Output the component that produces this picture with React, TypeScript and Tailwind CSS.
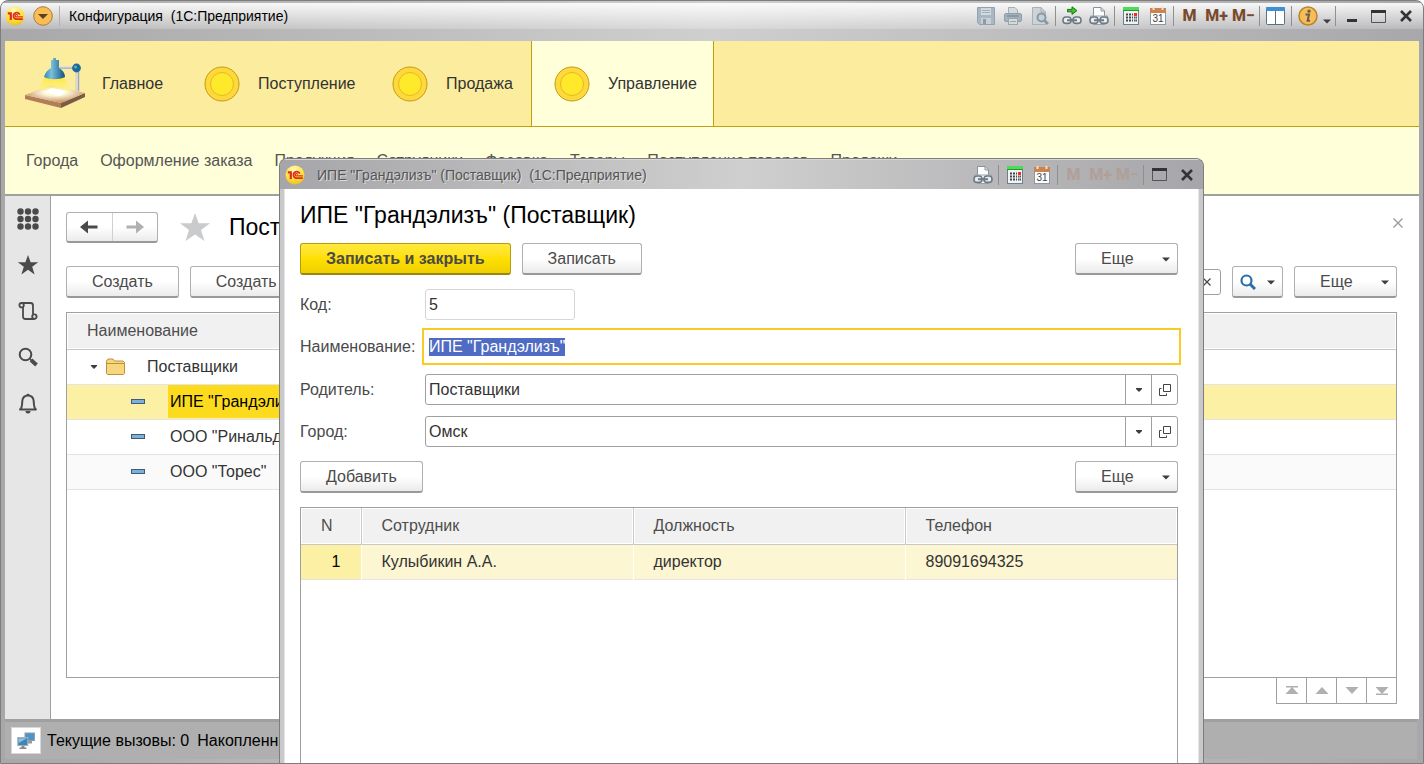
import type { ReactNode } from 'react';

const BTN =
  'h-8 rounded-[3px] border border-[#b0b0b0] border-b-2 border-b-[#999] bg-gradient-to-b from-white from-50% to-[#ebebeb] text-[#4a4a4a] flex items-center';

function Logo() {
  return (
    <svg width="20" height="20" viewBox="0 0 20 20" className="shrink-0">
      <defs>
        <radialGradient id="logo" cx="0.45" cy="0.25" r="0.8">
          <stop offset="0" stopColor="#fffbc0" />
          <stop offset="0.6" stopColor="#ffe23a" />
          <stop offset="1" stopColor="#e9b91c" />
        </radialGradient>
      </defs>
      <circle cx="10" cy="10" r="9.5" fill="url(#logo)" />
      <path d="M2.8 7.4 H5.8 V14" fill="none" stroke="#e02a1b" strokeWidth="2.2" />
      <path d="M14.8 8.6 A3.3 3.3 0 1 0 11.6 13.2 H17.8" fill="none" stroke="#e02a1b" strokeWidth="1.7" />
      <path d="M12.6 9.6 A1.2 1.2 0 1 0 11.6 10.9 H17.8" fill="none" stroke="#e02a1b" strokeWidth="1.2" />
    </svg>
  );
}

function Chain() {
  return (
    <g fill="none" stroke="#6d7984" strokeWidth="1.6">
      <rect x="1" y="11" width="8" height="6.4" rx="3" fill="#e8edf0" />
      <rect x="11" y="11" width="8" height="6.4" rx="3" fill="#e8edf0" />
      <path d="M5 14.2 H15" strokeWidth="2" />
    </g>
  );
}

function SaveIcon() {
  return (
    <svg width="20" height="20" viewBox="0 0 20 20">
      <path d="M1.5 1.5 H18.5 V18.5 H3.5 L1.5 16.5 Z" fill="#a9b7c3" stroke="#93a2af" />
      <rect x="5" y="2" width="10" height="7" fill="#d3dade" />
      <path d="M6 4.5 H14 M6 6.5 H14" stroke="#a3b0bb" />
      <rect x="5" y="12" width="10" height="6" fill="#c7d0d6" />
      <rect x="7" y="13" width="3" height="5" fill="#8c9ba9" />
    </svg>
  );
}

function PrintIcon() {
  return (
    <svg width="20" height="20" viewBox="0 0 20 20">
      <path d="M5.5 8 V1.5 H12 L14.5 4 V8" fill="#d5dadd" stroke="#a3adb5" />
      <rect x="1.5" y="7.5" width="17" height="8" rx="1.5" fill="#a5b3bf" stroke="#8f9daa" />
      <path d="M4 10 H16" stroke="#7f8f9c" strokeWidth="1.5" />
      <rect x="5.5" y="12.5" width="9" height="6" fill="#d5dadd" stroke="#9aa5ae" />
      <path d="M7 15.5 H13" stroke="#9aa5ae" />
    </svg>
  );
}

function PreviewIcon() {
  return (
    <svg width="20" height="20" viewBox="0 0 20 20">
      <path d="M2.5 1.5 H11 L15.5 6 V18.5 H2.5 Z" fill="#ced3d6" stroke="#a9b2b8" />
      <path d="M11 1.5 V6 H15.5" fill="none" stroke="#a9b2b8" />
      <circle cx="11.5" cy="11.5" r="4" fill="#c2d0da" stroke="#8798a6" strokeWidth="2" />
      <path d="M14.5 14.5 L18 18" stroke="#8798a6" strokeWidth="2.6" />
    </svg>
  );
}

function LinkIcon() {
  return (
    <svg width="20" height="20" viewBox="0 0 20 20">
      <Chain />
      <path d="M5.5 3.4 H10 V0.8 L15 4.6 L10 8.4 V5.8 H5.5 Z" fill="#3fc42c" stroke="#17770f" />
    </svg>
  );
}

function LinkPrintIcon() {
  return (
    <svg width="20" height="20" viewBox="0 0 20 20">
      <path d="M4.5 10 V1.5 H12 L15.5 5 V10" fill="#fff" stroke="#8592a0" />
      <path d="M12 1.5 V5 H15.5" fill="none" stroke="#8592a0" />
      <path d="M1.5 10 H18.5 V16 H15.5 V18.5 H4.5 V16 H1.5 Z" fill="#f4f6f8" stroke="#97a3ae" />
      <Chain />
    </svg>
  );
}

function CalcIcon() {
  return (
    <svg width="20" height="20" viewBox="0 0 20 20">
      <rect x="2.5" y="1.5" width="15" height="17" fill="#eef3f6" stroke="#6f7f8d" />
      <rect x="2" y="1" width="16" height="4" fill="#4ddb58" />
      <path d="M2 4.5 H18" stroke="#1f9a2c" />
      <path d="M5 8.5 H12 M5 11.5 H12 M5 14.5 H12" stroke="#444" strokeWidth="2" strokeDasharray="2 1" />
      <rect x="13" y="7" width="3" height="3" fill="#ff2a1f" />
      <path d="M13 11.5 H16 M13 14.5 H16" stroke="#555" strokeWidth="2" strokeDasharray="1.4 0.4" />
    </svg>
  );
}

function CalendarIcon() {
  return (
    <svg width="20" height="20" viewBox="0 0 20 20">
      <rect x="2.5" y="3.5" width="15" height="15" fill="#fdfdfd" stroke="#8b97a3" />
      <rect x="2" y="2" width="16" height="5" fill="#c98450" />
      <path d="M5.5 1 V4 M14.5 1 V4" stroke="#f4dcc8" strokeWidth="2" />
      <text x="10" y="16" textAnchor="middle" fontSize="10" fill="#444">31</text>
    </svg>
  );
}

function PanelsIcon() {
  return (
    <svg width="20" height="20" viewBox="0 0 20 20">
      <rect x="0.5" y="1.5" width="18" height="17" rx="1" fill="#fff" stroke="#5b6f82" />
      <rect x="0" y="1" width="19" height="4" rx="1" fill="#3f8fd4" />
      <path d="M9.5 5 V18" stroke="#5b6f82" />
    </svg>
  );
}

function InfoIcon() {
  return (
    <svg width="20" height="20" viewBox="0 0 20 20">
      <circle cx="10" cy="10" r="9" fill="#f6bd5a" stroke="#b8882c" strokeWidth="1.6" />
      <circle cx="11" cy="5.2" r="1.6" fill="#6a5c4a" />
      <path d="M7.5 8.5 H11 L9.6 14.8 H12" fill="none" stroke="#6a5c4a" strokeWidth="2" />
    </svg>
  );
}

function MaxIcon() {
  return (
    <svg width="15" height="13" viewBox="0 0 15 13">
      <path d="M0.5 2 V12.5 H14.5 V2" fill="none" stroke="#555" />
      <path d="M0 1.5 H15" stroke="#333" strokeWidth="3" />
    </svg>
  );
}

function CloseIcon() {
  return (
    <svg width="12" height="12" viewBox="0 0 12 12">
      <path d="M1 1 L11 11 M11 1 L1 11" stroke="#333" strokeWidth="2.6" />
    </svg>
  );
}

function Caret() {
  return (
    <svg width="8" height="5" viewBox="0 0 8 5" className="shrink-0 mt-0.5">
      <path d="M0 0.5 H8 L4 4.5 Z" fill="#3d3d3d" />
    </svg>
  );
}

function SmallCaret() {
  return (
    <svg width="6" height="4" viewBox="0 0 6 4" className="shrink-0">
      <path d="M0 0 H6 V1 L3 4 L0 1 Z" fill="#3d3d3d" />
    </svg>
  );
}

function LampIcon() {
  return (
    <svg width="60" height="52" viewBox="0 0 60 52" className="shrink-0">
      <defs>
        <linearGradient id="shade" x1="0" x2="1" y1="0" y2="0">
          <stop offset="0" stopColor="#2f86ae" />
          <stop offset="0.35" stopColor="#7cc0dc" />
          <stop offset="1" stopColor="#0f5480" />
        </linearGradient>
        <linearGradient id="light" x1="0" x2="0" y1="0" y2="1">
          <stop offset="0" stopColor="#ffe83a" />
          <stop offset="1" stopColor="#fff6a8" stopOpacity="0.4" />
        </linearGradient>
        <radialGradient id="desk" cx="0.5" cy="0.4" r="0.55">
          <stop offset="0" stopColor="#fff" />
          <stop offset="0.35" stopColor="#fff6dc" />
          <stop offset="1" stopColor="#c69868" />
        </radialGradient>
      </defs>
      <path d="M0 37 L36 45 V50 L0 41 Z" fill="#b37c5a" />
      <path d="M36 45 L60 35 V39 L36 50 Z" fill="#7d5a44" />
      <path d="M0 37 L26 27 L60 35 L36 45 Z" fill="url(#desk)" />
      <path d="M20 19 H39 L46 34 L28 38 L14 31 Z" fill="url(#light)" />
      <path d="M18 34 L26 30 L42 33 L35 38 Z" fill="#fff" />
      <path d="M34 9.5 H50" stroke="#b5b9bd" strokeWidth="3" />
      <path d="M34 8.8 H50" stroke="#f0f2f3" />
      <path d="M52.5 12 V33" stroke="#a2a5aa" strokeWidth="3.4" />
      <path d="M52 12 V33" stroke="#eceef0" strokeWidth="1.4" />
      <circle cx="51.5" cy="10" r="4.4" fill="#1c6a97" />
      <circle cx="50.5" cy="9" r="1.5" fill="#5fa9cb" />
      <path d="M28 0 H31 V2 H34 V10 C37 11.5 40 15 40 19 C34 22 25 22 19 19 C20 15 23 11.5 26 10 V2 H28 Z" fill="url(#shade)" />
    </svg>
  );
}

function Coin() {
  return (
    <svg width="36" height="36" viewBox="0 0 36 36" className="shrink-0">
      <circle cx="18" cy="18" r="17" fill="#ffd83e" stroke="#c09c10" />
      <circle cx="18" cy="18" r="11.5" fill="#ffe92b" stroke="#e6b821" />
    </svg>
  );
}

function Cell({ label, children }: { label: string; children: ReactNode }) {
  return (
    <button aria-label={label} className="w-[27px] h-6 flex items-center justify-center">
      {children}
    </button>
  );
}

function Sep() {
  return <div className="w-px h-5 mx-0.5 bg-[#8f8f8f]" />;
}

function MemoryKeys({ color }: { color: string }) {
  return (
    <div className={`flex text-base font-extrabold font-[Roboto,sans-serif] ${color}`}>
      {['M', 'M+', 'M−'].map(k => (
        <button key={k} className="w-[27px] flex justify-center whitespace-nowrap">{k}</button>
      ))}
    </div>
  );
}

function MoreButton() {
  return (
    <button className={`${BTN} w-[103px] pl-[25px] pr-[7px] justify-between`}>
      Еще
      <Caret />
    </button>
  );
}

function SelectField({ id, label, value }: { id: string; label: string; value: string }) {
  return (
    <div className="flex items-center">
      <label htmlFor={id} className="w-[125px] shrink-0 text-[#4a4a4a]">{label}</label>
      <div className="flex-1 flex h-[31px] rounded-[3px] border border-[#a0a0a0]">
        <div className="relative flex-1 flex">
          <select id={id} className="appearance-none w-full pl-[3px] pr-7 text-[#333] outline-none">
            <option>{value}</option>
          </select>
          <span className="absolute inset-y-0 right-0 w-[26px] border-l border-[#a0a0a0] flex items-center justify-center pointer-events-none">
            <SmallCaret />
          </span>
        </div>
        <button aria-label={`Открыть ${value}`} className="w-[26px] border-l border-[#a0a0a0] flex items-center justify-center">
          <svg width="12" height="12" viewBox="0 0 12 12">
            <path d="M4.5 0.5 H11.5 V7.5 H4.5 Z M2.5 4.5 H0.5 V11.5 H7.5 V9.5" fill="none" stroke="#444" />
          </svg>
        </button>
      </div>
    </div>
  );
}

function SupplierDialog() {
  return (
    <div
      role="dialog"
      className="absolute left-[278px] right-[219px] top-[157px] bottom-0 flex flex-col rounded-t-lg overflow-hidden border border-b-0 border-[#7d7d7d] bg-[#c9c9cb]"
    >
      <div className="h-[30px] shrink-0 flex items-center pl-[5px] pr-[3px] border-t border-[#d8d8d8] bg-gradient-to-r from-[#a6a6aa] via-[#cfcfcf] to-[#a6a6aa]">
        <Logo />
        <span className="ml-3 flex-1 text-sm text-[#555] [text-shadow:1px_1px_0_#dcdcdc] whitespace-pre">
          {'ИПЕ "Грандэлизъ" (Поставщик)  (1С:Предприятие)'}
        </span>
        <Cell label="Печать ссылки"><LinkPrintIcon /></Cell>
        <Sep />
        <Cell label="Калькулятор"><CalcIcon /></Cell>
        <Cell label="Календарь"><CalendarIcon /></Cell>
        <Sep />
        <MemoryKeys color="text-[#b0a098]" />
        <Sep />
        <Cell label="Развернуть"><MaxIcon /></Cell>
        <Cell label="Закрыть"><CloseIcon /></Cell>
      </div>

      <div className="flex-1 flex flex-col mx-1 pl-[15px] pr-5 bg-white border-x border-[#e6e6e6]">
        <h1 className="mt-3 text-[23px] leading-7 text-black">ИПЕ "Грандэлизъ" (Поставщик)</h1>

        <div className="mt-[14px] flex gap-[11px]">
          <button className="h-8 px-[25px] rounded-[3px] border border-[#b89c10] border-b-2 border-b-[#9c8612] bg-gradient-to-b from-[#ffe93c] via-[#ffe000] to-[#efcf00] font-bold text-[#4a4a4a]">
            Записать и закрыть
          </button>
          <button className={`${BTN} px-[25px]`}>Записать</button>
          <div className="flex-1" />
          <MoreButton />
        </div>

        <div className="mt-[14px] flex flex-col gap-[11px]">
          <div className="flex items-center">
            <label htmlFor="code" className="w-[125px] shrink-0 text-[#4a4a4a]">Код:</label>
            <input id="code" defaultValue="5" className="w-[150px] h-[31px] px-[3px] rounded-[3px] border border-[#d6d6d6] text-[#333] outline-none" />
          </div>
          <div className="flex items-center">
            <label htmlFor="name" className="w-[125px] shrink-0 text-[#4a4a4a]">Наименование:</label>
            <input
              id="name"
              autoFocus
              onFocus={e => e.currentTarget.select()}
              defaultValue={'ИПЕ "Грандэлизъ"'}
              className="flex-1 h-[31px] px-1 text-[#333] leading-[18px] outline-2 outline-offset-1 outline-[#fbca23] selection:bg-[#4f6bc3] selection:text-white"
            />
          </div>
        </div>
        <div className="mt-3 flex flex-col gap-[11px]">
          <SelectField id="parent" label="Родитель:" value="Поставщики" />
          <SelectField id="city" label="Город:" value="Омск" />
        </div>

        <div className="mt-[14px] flex justify-between">
          <button className={`${BTN} px-[25px]`}>Добавить</button>
          <MoreButton />
        </div>

        {/* Contact persons */}
        <div className="mt-[14px] flex-1 border border-b-0 border-[#a0a0a0]">
          <table className="w-full table-fixed text-left">
            <thead>
              <tr className="h-9 bg-[#f1f1f1] text-[#4d4d4d] border-b border-[#c8c8c8]">
                <th className="w-[60px] pl-5 font-normal border-r border-[#c8c8c8] shadow-[inset_0_0_0_1px_#fff]">N</th>
                <th className="pl-5 font-normal border-r border-[#c8c8c8] shadow-[inset_0_0_0_1px_#fff]">Сотрудник</th>
                <th className="pl-5 font-normal border-r border-[#c8c8c8] shadow-[inset_0_0_0_1px_#fff]">Должность</th>
                <th className="pl-5 font-normal shadow-[inset_0_0_0_1px_#fff]">Телефон</th>
              </tr>
            </thead>
            <tbody>
              <tr className="h-[35px] bg-[#fdf6d2] text-[#333] border-b border-[#e4e4e4]">
                <td className="pr-5 text-right text-black bg-[#fcf0a5] border-r border-white">1</td>
                <td className="pl-5 border-r border-white">Кулыбикин А.А.</td>
                <td className="pl-5 border-r border-white">директор</td>
                <td className="pl-5">89091694325</td>
              </tr>
            </tbody>
          </table>
        </div>
      </div>
    </div>
  );
}

function Sidebar() {
  return (
    <nav className="w-[46px] shrink-0 bg-[#e6e6e6] border-r border-[#a0a0a0] flex flex-col">
      <button aria-label="Меню" className="h-[46px] flex items-center justify-center">
        <svg width="22" height="22" viewBox="0 0 22 22" fill="#4a4a4a">
          {[3.5, 11, 18.5].map(y => [3.5, 11, 18.5].map(x => <circle key={`${x}-${y}`} cx={x} cy={y} r="3.2" />))}
        </svg>
      </button>
      <button aria-label="Избранное" className="h-[46px] flex items-center justify-center">
        <svg width="22" height="22" viewBox="0 0 22 22">
          <path d="M11 1 L13.6 8.2 H21.2 L15.2 12.8 L17.6 20.4 L11 15.8 L4.4 20.4 L6.8 12.8 L0.8 8.2 H8.4 Z" fill="#4a4a4a" />
        </svg>
      </button>
      <button aria-label="История" className="h-[46px] flex items-center justify-center">
        <svg width="20" height="20" viewBox="0 0 20 20" fill="none" stroke="#4a4a4a" strokeWidth="1.8">
          <path d="M3.5 2 H12.5 Q15 2 15 4.5 V13" />
          <path d="M5 6 V15.5 Q5 18 7.5 18 H16.5" />
          <circle cx="3.6" cy="4.2" r="2.2" />
          <circle cx="16.4" cy="15.6" r="2.2" />
        </svg>
      </button>
      <button aria-label="Поиск" className="h-[46px] flex items-center justify-center">
        <svg width="20" height="20" viewBox="0 0 20 20" fill="none" stroke="#4a4a4a">
          <circle cx="7.5" cy="7.5" r="5.8" strokeWidth="2" />
          <path d="M12 12 L13.5 13.5" strokeWidth="1.6" />
          <path d="M13 13 L18.5 18" strokeWidth="3.8" />
        </svg>
      </button>
      <button aria-label="Оповещения" className="h-[46px] flex items-center justify-center">
        <svg width="20" height="22" viewBox="0 0 20 22">
          <path d="M2 17.5 C4.5 15.5 4 12 4.3 9 C4.7 5.5 7 3.5 10 3.5 C13 3.5 15.3 5.5 15.7 9 C16 12 15.5 15.5 18 17.5 Z" fill="none" stroke="#4a4a4a" strokeWidth="2" strokeLinejoin="round" />
          <path d="M8.3 3 A1.8 1.8 0 0 1 11.7 3 Z M7.5 19 H12.5 A2.5 2.5 0 0 1 7.5 19 Z" fill="#4a4a4a" />
        </svg>
      </button>
    </nav>
  );
}

function DashIcon() {
  return <span className="w-[14px] h-[5px] border border-[#3a5d7c] bg-[#7fb0d8]" />;
}

const SUBMENU = ['Города', 'Оформление заказа', 'Продукция', 'Сотрудники', 'Фасовка', 'Товары', 'Поступление товаров', 'Продажи'];

export default function App() {
  return (
    <div className="relative h-screen min-h-[600px] overflow-hidden flex flex-col text-base leading-[18px] font-['Liberation_Sans',Arial,sans-serif] rounded-t-lg border border-[#7d7d7d] bg-gradient-to-r from-[#a8a8aa] via-[#cfcfcf] to-[#a8a8ac] px-1 pb-1">
      {/* Title bar */}
      <div className="-mx-1 px-1 h-[26px] mt-0.5 shrink-0 flex items-center bg-gradient-to-b from-white/90 to-white/20">
        <Logo />
        <button aria-label="Главное меню" className="ml-2">
          <svg width="20" height="20" viewBox="0 0 20 20">
            <circle cx="10" cy="10" r="9.3" fill="#f8bd55" stroke="#a87b35" />
            <path d="M5 8 H15 L10 13 Z" fill="#5c4020" />
          </svg>
        </button>
        <div className="ml-1.5 w-px h-5 bg-[#b0b0b0]" />
        <span className="ml-[9px] flex-1 text-sm text-black whitespace-pre">{'Конфигурация  (1С:Предприятие)'}</span>
        <Cell label="Сохранить"><SaveIcon /></Cell>
        <Cell label="Печать"><PrintIcon /></Cell>
        <Cell label="Просмотр"><PreviewIcon /></Cell>
        <Sep />
        <Cell label="Перейти по ссылке"><LinkIcon /></Cell>
        <Cell label="Получить ссылку"><LinkPrintIcon /></Cell>
        <Sep />
        <Cell label="Калькулятор"><CalcIcon /></Cell>
        <Cell label="Календарь"><CalendarIcon /></Cell>
        <Sep />
        <MemoryKeys color="text-[#7a4a2a]" />
        <Sep />
        <Cell label="Панели"><PanelsIcon /></Cell>
        <Sep />
        <Cell label="Справка"><InfoIcon /></Cell>
        <span className="w-3 pt-2 flex justify-center"><Caret /></span>
        <Sep />
        <Cell label="Свернуть"><span className="mt-2 w-[10px] h-[3px] bg-[#333]" /></Cell>
        <Cell label="Развернуть окно"><MaxIcon /></Cell>
        <Cell label="Закрыть окно"><CloseIcon /></Cell>
      </div>

      {/* Sections */}
      <div className="mt-3 h-[86px] shrink-0 flex bg-[#fbec9e] border-b border-[#c0a010] text-[#333]">
        <button className="w-[177px] pl-5 flex items-center gap-[17px]"><LampIcon />Главное</button>
        <button className="w-[188px] pl-[22px] flex items-center gap-[18px]"><Coin />Поступление</button>
        <button className="w-[161px] pl-[22px] flex items-center gap-[18px]"><Coin />Продажа</button>
        <button className="w-[183px] pl-[22px] flex items-center gap-[18px] bg-[#ffffda] border-x border-[#c0a010]"><Coin />Управление</button>
      </div>
      <div className="h-[69px] shrink-0 flex items-center gap-[22px] pl-[21px] overflow-hidden bg-[#ffffda] border-b-2 border-[#a0a0a0]">
        {SUBMENU.map(s => (
          <a key={s} href="#" className="text-[#555] whitespace-nowrap">{s}</a>
        ))}
      </div>

      <div className="flex-1 flex min-h-0 bg-white">
        <Sidebar />
        <main className="flex-1 flex flex-col pl-[15px] pr-[22px] pt-[15px] pb-[15px]">
          <div className="flex items-center h-8">
            <div className="flex h-[31px] w-[92px] rounded-[3px] border border-[#b0b0b0] border-b-2 border-b-[#999] bg-gradient-to-b from-white from-50% to-[#ebebeb]">
              <button aria-label="Назад" className="flex-1 flex items-center justify-center border-r border-[#d0d0d0]">
                <svg width="18" height="14" viewBox="0 0 18 14"><path d="M0 7 L8 0.5 V5.4 H17.5 V8.6 H8 V13.5 Z" fill="#4a4a4a" /></svg>
              </button>
              <button aria-label="Вперед" className="flex-1 flex items-center justify-center">
                <svg width="18" height="14" viewBox="0 0 18 14"><path d="M18 7 L10 0.5 V5.4 H0.5 V8.6 H10 V13.5 Z" fill="#b0b0b0" /></svg>
              </button>
            </div>
            <svg width="30" height="28" viewBox="0 0 30 28" className="ml-[22px]">
              <path d="M15 0 L18.7 10.2 H30 L21 17 L24.5 28 L15 21.4 L5.5 28 L9 17 L0 10.2 H11.3 Z" fill="#c9cbcc" />
            </svg>
            <h2 className="ml-[19px] flex-1 text-[23px] leading-7 text-black">Поставщики</h2>
            <button aria-label="Закрыть страницу" className="-mr-1.5 mb-2">
              <svg width="10" height="10" viewBox="0 0 10 10"><path d="M0.5 0.5 L9.5 9.5 M9.5 0.5 L0.5 9.5" stroke="#999" strokeWidth="1.3" /></svg>
            </button>
          </div>

          <div className="mt-[23px] flex items-center gap-[11px]">
            <button className={`${BTN} px-[25px]`}>Создать</button>
            <button className={`${BTN} px-[25px]`}>Создать группу</button>
            <div className="flex-1" />
            <div className="flex h-[26px] w-[220px] rounded-[3px] border border-[#a0a0a0]">
              <input aria-label="Поиск" className="flex-1 min-w-0 px-1 outline-none" />
              <button aria-label="Очистить" className="w-[26px] flex items-center justify-center">
                <svg width="8" height="8" viewBox="0 0 8 8"><path d="M0.5 0.5 L7.5 7.5 M7.5 0.5 L0.5 7.5" stroke="#444" strokeWidth="1.2" /></svg>
              </button>
            </div>
            <button aria-label="Найти" className={`${BTN} w-[51px] justify-between pl-[7px] pr-[7px]`}>
              <svg width="16" height="16" viewBox="0 0 16 16" fill="none" stroke="#2a6fa8">
                <circle cx="6.5" cy="6.5" r="5" strokeWidth="2.2" />
                <path d="M10 10 L15 15" strokeWidth="3" />
              </svg>
              <Caret />
            </button>
            <MoreButton />
          </div>

          <div className="mt-[14px] flex-1 border border-[#a0a0a0]">
            <table className="w-full text-left">
              <thead>
                <tr className="h-9 bg-[#f1f1f1] border-b border-[#c8c8c8]">
                  <th className="pl-5 font-normal text-[#4d4d4d] shadow-[inset_0_0_0_1px_#fff]">Наименование</th>
                </tr>
              </thead>
              <tbody className="text-[#333]">
                <tr className="h-[35px] border-b border-[#e4e4e4]">
                  <td>
                    <div className="flex items-center pl-6">
                      <SmallCaret />
                      <svg width="19" height="17" viewBox="0 0 19 17" className="ml-[9px] mr-[22px]">
                        <path d="M0.5 15.5 V3 L2 1 H7 L8.5 3 H17 L18.5 4.5 V15.5 L17.5 16.5 H1.5 Z" fill="#f7d77e" stroke="#c08f3a" />
                        <path d="M1 5.5 H18" stroke="#c08f3a" />
                      </svg>
                      Поставщики
                    </div>
                  </td>
                </tr>
                <tr className="h-[35px] border-b border-[#e4e4e4] bg-[#fcf0a5] text-black">
                  <td className="py-0">
                    <div className="flex items-center pl-16">
                      <DashIcon />
                      <span className="ml-[23px] h-[33px] px-0.5 flex items-center bg-[#fcdb1f]">ИПЕ "Грандэлизъ"</span>
                    </div>
                  </td>
                </tr>
                <tr className="h-[35px] border-b border-[#e4e4e4]">
                  <td><div className="flex items-center pl-16 gap-[25px]"><DashIcon />ООО "Ринальди"</div></td>
                </tr>
                <tr className="h-[35px] border-b border-[#e4e4e4] bg-[#fafafa]">
                  <td><div className="flex items-center pl-16 gap-[25px]"><DashIcon />ООО "Торес"</div></td>
                </tr>
              </tbody>
            </table>
          </div>
          <div className="-mt-px self-end flex h-[27px] border border-[#a0a0a0] divide-x divide-[#a0a0a0]">
            <button aria-label="В начало" className="w-[30px] flex items-center justify-center">
              <svg width="14" height="9" viewBox="0 0 14 9"><path d="M1 0 H13 V1.5 H1 Z M7 1 L13.5 8 H0.5 Z" fill="#b0b0b0" /></svg>
            </button>
            <button aria-label="Вверх" className="w-[30px] flex items-center justify-center">
              <svg width="14" height="7" viewBox="0 0 14 7"><path d="M7 0 L13.5 7 H0.5 Z" fill="#b0b0b0" /></svg>
            </button>
            <button aria-label="Вниз" className="w-[30px] flex items-center justify-center">
              <svg width="14" height="7" viewBox="0 0 14 7"><path d="M7 7 L13.5 0 H0.5 Z" fill="#b0b0b0" /></svg>
            </button>
            <button aria-label="В конец" className="w-[29px] flex items-center justify-center">
              <svg width="14" height="9" viewBox="0 0 14 9"><path d="M1 7.5 H13 V9 H1 Z M7 8 L13.5 1 H0.5 Z" fill="#b0b0b0" /></svg>
            </button>
          </div>
        </main>
      </div>

      {/* Status bar */}
      <div className="h-10 shrink-0 flex items-center pl-1.5 mr-0.5 bg-[#afafaf] border-t-3 border-t-[#a0a0a0] text-black">
        <button aria-label="Показатели" className="w-[30px] h-[27px] mr-1.5 bg-white border border-[#d8d8d8] flex items-center justify-center">
          <svg width="18" height="18" viewBox="0 0 18 18">
            <rect x="8" y="1" width="9.5" height="7.5" fill="#4f94c4" stroke="#8fa0ad" />
            <path d="M11 9 H15 V11.5 H11 Z" fill="#999" />
            <rect x="0.8" y="5.5" width="10" height="8" fill="#3f86b8" stroke="#9fb0bb" />
            <path d="M1.5 6.2 H10 L1.5 11 Z" fill="#8fc0e0" />
            <path d="M4.5 14 H7.5 V15.5 H9.5 V17 H2.5 V15.5 H4.5 Z" fill="#888" />
          </svg>
        </button>
        Текущие вызовы: 0
        <span className="ml-2">Накопленные вызовы: 0</span>
      </div>

      <SupplierDialog />
    </div>
  );
}
